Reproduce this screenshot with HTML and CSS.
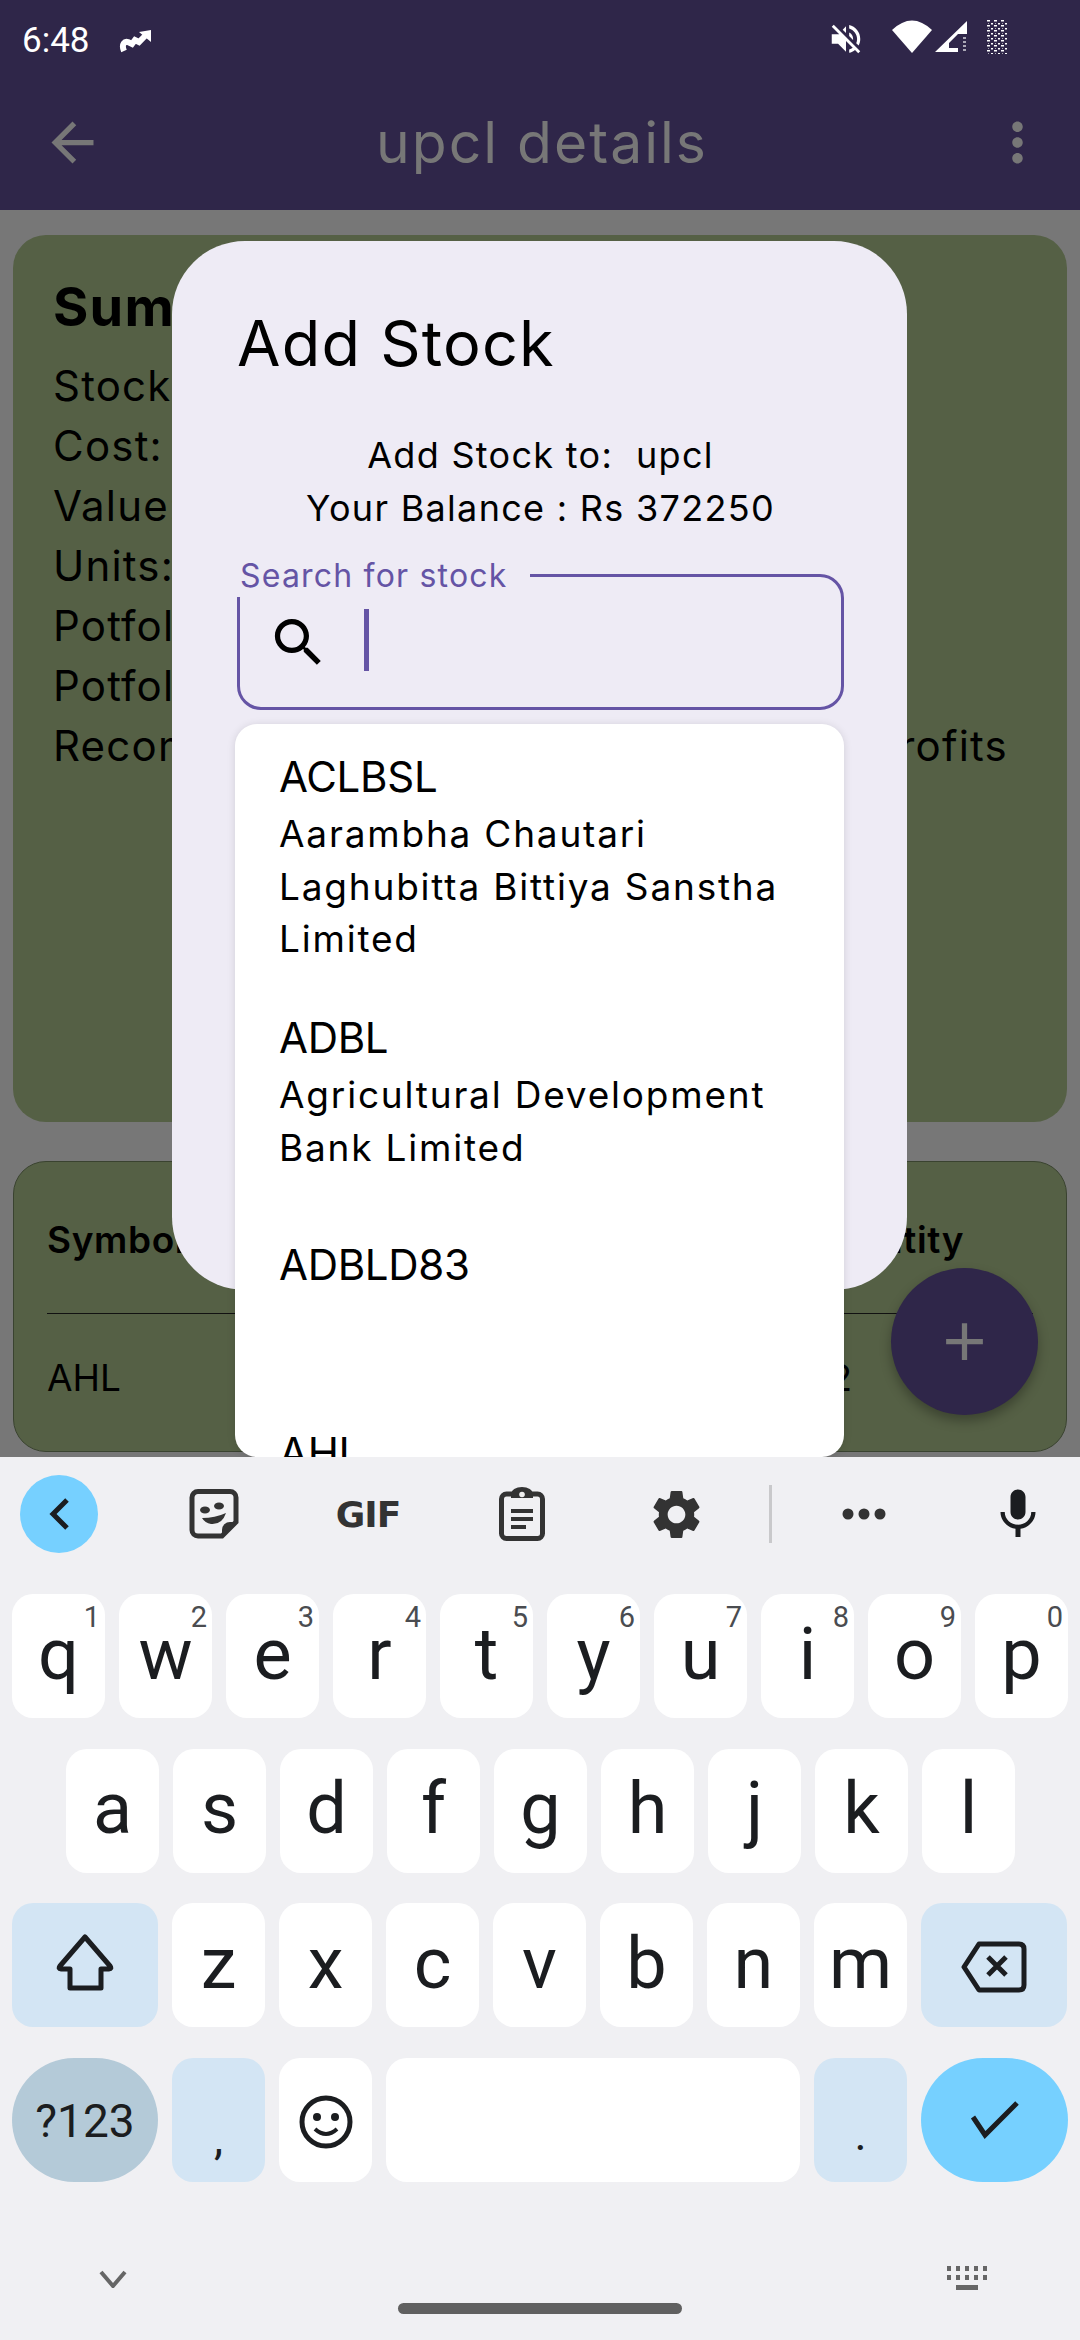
FILE: index.html
```html
<!DOCTYPE html>
<html lang="en">
<head>
    <meta charset="UTF-8">
    <meta name="viewport" content="width=device-width, initial-scale=1.0">
    <title>upcl details</title>
    <link rel="stylesheet" href="styles.css">
</head>
<body>
    <div class="app">
        <div class="status-bar">
            <span class="time">6:48</span>
            <svg class="notif-icon" width="32" height="24" viewBox="0 0 32 24"><path d="M5 21C2 14 6 11 9 12L13 14 16 10 20 12 26 6" fill="none" stroke="#fff" stroke-width="6"/><path d="M20 2 32 0V12Z" fill="#fff"/></svg>
            <svg class="mute-icon" width="38" height="38" viewBox="0 0 24 24"><path fill="#fff" d="M16.5 12c0-1.77-1.02-3.29-2.5-4.03v2.21l2.45 2.45c.03-.2.05-.41.05-.63zm2.5 0c0 .94-.2 1.82-.54 2.64l1.51 1.51C20.63 14.91 21 13.5 21 12c0-4.28-2.99-7.86-7-8.77v2.06c2.89.86 5 3.54 5 6.71zM4.27 3L3 4.27 7.73 9H3v6h4l5 5v-6.73l4.25 4.25c-.67.52-1.42.93-2.25 1.18v2.06c1.38-.31 2.63-.95 3.69-1.81L19.73 21 21 19.73l-9-9L4.27 3zM12 4L9.91 6.09 12 8.18V4z"/></svg>
            <svg class="wifi-icon" width="40" height="34" viewBox="0 0 40 34"><path fill="#fff" d="M0 10Q20 -9 40 10L20 33Z"/></svg>
            <svg class="signal-icon" width="34" height="34" viewBox="0 0 34 34"><path fill="#fff" fill-rule="evenodd" d="M33 1V14H24V32H1ZM24 14 15 23V28H24Z"/><path fill="#fff" opacity=".6" d="M29 17h3v2h-3zM29 21h3v2h-3zM29 25h3v2h-3zM29 29h3v2h-3z"/></svg>
            <svg class="battery-icon" width="20" height="34" viewBox="0 0 20 34">
                <defs><pattern id="noise" width="7" height="5" patternUnits="userSpaceOnUse"><rect width="3" height="1.500" fill="#fff"/><rect x="4" y="3" width="2" height="1.500" fill="#fff"/><rect x="1" y="3" width="1" height="1" fill="#fff" opacity=".6"/></pattern></defs>
                <rect width="20" height="34" fill="url(#noise)"/>
            </svg>
        </div>
        <div class="app-bar">
            <svg width="63" height="63" viewBox="0 0 24 24"><path fill="#777" d="M20 11H7.83l5.59-5.59L12 4l-8 8 8 8 1.41-1.41L7.83 13H20v-2z"/></svg>
            <span class="app-title">upcl details</span>
            <svg width="63" height="63" viewBox="0 0 24 24"><path fill="#777" d="M12 8c1.1 0 2-.9 2-2s-.9-2-2-2-2 .9-2 2 .9 2 2 2zm0 2c-1.1 0-2 .9-2 2s.9 2 2 2 2-.9 2-2-.9-2-2-2zm0 6c-1.1 0-2 .9-2 2s.9 2 2 2 2-.9 2-2-.9-2-2-2z"/></svg>
        </div>

        <div class="card summary">
            <h2>Summary</h2>
            <p>Stocks</p>
            <p>Cost:</p>
            <p>Value:</p>
            <p>Units:</p>
            <p>Potfolio</p>
            <p>Potfolio</p>
            <p class="split"><span>Recommended</span><span>profits</span></p>
        </div>

        <div class="card holdings">
            <div class="holdings-head"><span>Symbol</span><span>Quantity</span></div>
            <div class="holdings-row"><span>AHL</span><span>12</span></div>
        </div>

        <div class="fab">
            <svg width="63" height="63" viewBox="0 0 24 24"><path fill="#777" d="M19 13h-6v6h-2v-6H5v-2h6V5h2v6h6v2z"/></svg>
        </div>

        <div class="dialog">
            <h1>Add Stock</h1>
            <p class="dialog-info">Add Stock to:&nbsp; upcl</p>
            <p class="dialog-info">Your Balance : Rs 372250</p>
            <div class="field field-active">
                <span class="field-label">Search for stock</span>
                <svg width="63" height="63" viewBox="0 0 24 24"><path fill="#000" d="M15.5 14h-.79l-.28-.27C15.41 12.59 16 11.11 16 9.5 16 5.91 13.09 3 9.5 3S3 5.91 3 9.5 5.91 16 9.5 16c1.61 0 3.09-.59 4.23-1.57l.27.28v.79l5 4.99L20.49 19l-4.99-5zm-6 0C7.01 14 5 11.99 5 9.5S7.01 5 9.5 5 14 7.01 14 9.5 11.99 14 9.5 14z"/></svg>
                <span class="caret"></span>
            </div>
            <div class="field field-idle"></div>
            <div class="field field-idle"></div>
        </div>

        <div class="dropdown">
            <div class="option option-three">
                <div class="symbol">ACLBSL</div>
                <div class="company">Aarambha Chautari<br>Laghubitta Bittiya Sanstha<br>Limited</div>
            </div>
            <div class="option option-two">
                <div class="symbol">ADBL</div>
                <div class="company">Agricultural Development<br>Bank Limited</div>
            </div>
            <div class="option option-empty">
                <div class="symbol">ADBLD83</div>
            </div>
            <div class="option">
                <div class="symbol">AHL</div>
            </div>
        </div>
    </div>

    <div class="keyboard">
        <div class="toolbar">
            <div class="tool-back">
                <svg width="26" height="36" viewBox="0 0 26 36"><path d="M21 4 7 18 21 32" fill="none" stroke="#1b1d20" stroke-width="5"/></svg>
            </div>
            <div class="tool tool-sticker">
                <svg width="50" height="50" viewBox="0 0 50 50"><path d="M9 2.5H41a6 6 0 0 1 6 6V33L33 47H9a6 6 0 0 1-6-6V8.5a6 6 0 0 1 6-6Z" fill="none" stroke="#333" stroke-width="5"/><path d="M47 33 33 47V41a8 8 0 0 1 8-8Z" fill="#333"/><ellipse cx="16" cy="21" rx="5" ry="3.5" fill="#333"/><ellipse cx="30" cy="17" rx="5" ry="3.5" fill="#333"/><path d="M13 29Q26 29 37 24 33 36 22 35 16 34 13 29Z" fill="#333"/></svg>
            </div>
            <div class="tool"><span class="gif">GIF</span></div>
            <div class="tool">
                <svg width="46" height="54" viewBox="0 0 46 54"><rect x="2.5" y="7" width="41" height="44.5" rx="5" fill="none" stroke="#333" stroke-width="5"/><path d="M12 7a11 7 0 0 1 22 0v4H12Z" fill="#333"/><circle cx="23" cy="7.500" r="2.800" fill="#eee"/><path d="M12 22h22v4H12zM12 30h22v4H12zM12 38h15v4H12z" fill="#333"/></svg>
            </div>
            <div class="tool">
                <svg width="59" height="59" viewBox="0 0 24 24"><path fill="#333" d="M19.14 12.94c.04-.3.06-.61.06-.94 0-.32-.02-.64-.07-.94l2.03-1.58c.18-.14.23-.41.12-.61l-1.92-3.32c-.12-.22-.37-.29-.59-.22l-2.39.96c-.5-.38-1.03-.7-1.62-.94l-.36-2.54c-.04-.24-.24-.41-.48-.41h-3.84c-.24 0-.43.17-.47.41l-.36 2.54c-.59.24-1.13.57-1.62.94l-2.39-.96c-.22-.08-.47 0-.59.22L2.74 8.87c-.12.21-.08.47.12.61l2.03 1.58c-.05.3-.09.63-.09.94s.02.64.07.94l-2.03 1.58c-.18.14-.23.41-.12.61l1.92 3.32c.12.22.37.29.59.22l2.39-.96c.5.38 1.03.7 1.62.94l.36 2.54c.05.24.24.41.48.41h3.84c.24 0 .44-.17.47-.41l.36-2.54c.59-.24 1.13-.56 1.62-.94l2.39.96c.22.08.47 0 .59-.22l1.92-3.32c.12-.22.07-.47-.12-.61l-2.01-1.58zM12 15.6c-1.98 0-3.6-1.62-3.6-3.6s1.62-3.6 3.6-3.6 3.6 1.62 3.6 3.6-1.62 3.6-3.6 3.6z"/></svg>
            </div>
            <div class="tool-divider"></div>
            <div class="tool tool-more">
                <svg width="44" height="12" viewBox="0 0 44 12"><circle cx="6" cy="6" r="5.500" fill="#333"/><circle cx="22" cy="6" r="5.500" fill="#333"/><circle cx="38" cy="6" r="5.500" fill="#333"/></svg>
            </div>
            <div class="tool">
                <svg width="63" height="63" viewBox="0 0 24 24"><path fill="#1b1d20" d="M12 14c1.66 0 3-1.34 3-3V5c0-1.66-1.34-3-3-3S9 3.34 9 5v6c0 1.66 1.34 3 3 3zm5.3-3c0 3-2.54 5.1-5.3 5.1S6.7 14 6.7 11H5c0 3.41 2.72 6.23 6 6.72V21h2v-3.28c3.28-.48 6-3.3 6-6.72h-1.7z"/></svg>
            </div>
        </div>

        <div class="rows">
            <div class="row">
                <div class="key">q<sup>1</sup></div>
                <div class="key">w<sup>2</sup></div>
                <div class="key">e<sup>3</sup></div>
                <div class="key">r<sup>4</sup></div>
                <div class="key">t<sup>5</sup></div>
                <div class="key">y<sup>6</sup></div>
                <div class="key">u<sup>7</sup></div>
                <div class="key">i<sup>8</sup></div>
                <div class="key">o<sup>9</sup></div>
                <div class="key">p<sup>0</sup></div>
            </div>
            <div class="row row-home">
                <div class="key">a</div>
                <div class="key">s</div>
                <div class="key">d</div>
                <div class="key">f</div>
                <div class="key">g</div>
                <div class="key">h</div>
                <div class="key">j</div>
                <div class="key">k</div>
                <div class="key">l</div>
            </div>
            <div class="row">
                <div class="key key-wide key-blue">
                    <svg width="60" height="58" viewBox="0 0 60 58"><path d="M30 3 55 32Q57 35 54 35H46V54H15V35H6Q3 35 5 32Z" fill="none" stroke="#1b1d20" stroke-width="5" stroke-linejoin="round"/></svg>
                </div>
                <div class="key">z</div>
                <div class="key">x</div>
                <div class="key">c</div>
                <div class="key">v</div>
                <div class="key">b</div>
                <div class="key">n</div>
                <div class="key">m</div>
                <div class="key key-wide key-blue key-icon">
                    <svg width="66" height="52" viewBox="0 0 66 52"><path d="M18 3H58Q63 3 63 8V44Q63 49 58 49H18L3 26Z" fill="none" stroke="#1b1d20" stroke-width="5" stroke-linejoin="round"/><path d="M27 16 45 34M45 16 27 34" stroke="#1b1d20" stroke-width="5"/></svg>
                </div>
            </div>
            <div class="row">
                <div class="key key-wide key-symbols">?123</div>
                <div class="key key-blue key-punct key-comma">,</div>
                <div class="key key-icon">
                    <svg width="54" height="54" viewBox="0 0 54 54"><circle cx="27" cy="27" r="24" fill="none" stroke="#1b1d20" stroke-width="5"/><circle cx="18" cy="22" r="4" fill="#1b1d20"/><circle cx="36" cy="22" r="4" fill="#1b1d20"/><path d="M16 34Q27 44 38 34" fill="none" stroke="#1b1d20" stroke-width="4"/></svg>
                </div>
                <div class="key key-space"></div>
                <div class="key key-blue key-punct">.</div>
                <div class="key key-wide key-done">
                    <svg width="52" height="40" viewBox="0 0 52 40"><path d="M4 17 16 35 48 3" fill="none" stroke="#1b1d20" stroke-width="5"/></svg>
                </div>
            </div>
        </div>

        <div class="kb-nav">
            <svg width="28" height="18" viewBox="0 0 28 18"><path d="M2 2 14 16 26 2" fill="none" stroke="#666" stroke-width="4"/></svg>
            <svg width="41" height="26" viewBox="0 0 41 26"><path fill="#666" d="M0 0h4v5H0zM9 0h4v5H9zM18 0h4v5h-4zM27 0h4v5h-4zM36 0h4v5h-4zM0 9h4v5H0zM9 9h4v5H9zM18 9h4v5h-4zM27 9h4v5h-4zM36 9h4v5h-4zM9 19h22v5H9z"/></svg>
        </div>
        <div class="home-pill"></div>
    </div>
</body>
</html>
```

FILE: styles.css
```css
/* page */
body {
    margin: 0;
    width: 1080px;
    height: 2340px;
    overflow: hidden;
    font-family: Inter, "Noto Sans", sans-serif;
    background: #f0f0f3;
}
h1, h2, p {
    margin: 0;
    font-weight: normal;
}

/* app behind the dialog */
.app {
    position: relative;
    height: 1457px;
    background: #777;
    overflow: hidden;
}
.status-bar {
    display: flex;
    align-items: flex-start;
    height: 60px;
    padding: 20px 0 0 22px;
    background: #2f2649;
}
.time {
    font-family: Roboto, sans-serif;
    font-size: 35px;
    line-height: 41px;
    color: #fff;
}
.notif-icon { margin: 10px 0 0 29px; }
.mute-icon { margin: 0 0 0 676px; }
.wifi-icon { margin-left: 27px; }
.signal-icon { margin-left: 2px; }
.battery-icon { margin-left: 19px; }

.app-bar {
    display: flex;
    align-items: center;
    justify-content: space-between;
    height: 124px;
    padding: 0 31px 6px 41px;
    background: #2f2649;
}
.app-title {
    margin-right: 6px;
    font-size: 57px;
    letter-spacing: 2px;
    color: #777;
}

.card {
    margin: 0 13px;
    background: #556045;
    border-radius: 33px;
    color: #000;
    box-sizing: border-box;
}
.summary {
    height: 887px;
    margin-top: 25px;
    padding: 37px 59px 0 40px;
    font-size: 42px;
    letter-spacing: 1.2px;
}
.summary h2 {
    font-size: 54px;
    font-weight: 700;
    line-height: 70px;
    margin-bottom: 14px;
}
.summary p {
    height: 60px;
    line-height: 60px;
}
.split {
    display: flex;
    justify-content: space-between;
}
.holdings {
    height: 291px;
    margin-top: 39px;
    padding: 0 33px;
    border: 1px solid #3a4330;
    font-size: 37px;
}
.holdings-head {
    display: flex;
    justify-content: space-between;
    height: 151px;
    line-height: 156px;
    padding-right: 69px;
    border-bottom: 1.500px solid #111;
    font-weight: 600;
    letter-spacing: .6px;
}
.holdings-row {
    display: flex;
    justify-content: space-between;
    line-height: 128px;
    padding-right: 181px;
}
.fab {
    position: absolute;
    left: 891px;
    top: 1268px;
    width: 147px;
    height: 147px;
    display: flex;
    align-items: center;
    justify-content: center;
    border-radius: 50%;
    background: #2f2649;
    box-shadow: 0 6px 12px rgba(0, 0, 0, .3);
}

/* dialog */
.dialog {
    position: absolute;
    left: 172px;
    top: 241px;
    width: 735px;
    height: 1049px;
    box-sizing: border-box;
    padding: 59px 63px 0 65px;
    background: #eeebf5;
    border-radius: 73px;
    overflow: hidden;
}
.dialog h1 {
    font-size: 63px;
    line-height: 86px;
    letter-spacing: 1.2px;
    color: #000;
    margin-bottom: 43px;
}
.dialog-info {
    font-size: 36px;
    line-height: 53px;
    letter-spacing: 1.300px;
    text-align: center;
    color: #000;
}
.field {
    position: relative;
    box-sizing: border-box;
    width: 607px;
    height: 136px;
    border-radius: 24px;
}
.field-active {
    display: flex;
    align-items: center;
    margin-top: 39px;
    padding: 0 0 0 27px;
    border: 3px solid #6554a5;
}
.field-idle {
    margin-top: 32px;
    border: 2px solid #a9a0d2;
}
.field-label {
    position: absolute;
    left: -4px;
    top: -14px;
    height: 34px;
    padding: 0 22px 0 4px;
    background: #eeebf5;
    font-size: 32px;
    line-height: 26px;
    letter-spacing: 1.200px;
    color: #6554a5;
    white-space: nowrap;
}
.caret {
    width: 5px;
    height: 62px;
    margin-left: 34px;
    margin-bottom: 5px;
    background: #6554a5;
}

.dropdown {
    position: absolute;
    left: 235px;
    top: 724px;
    width: 608.500px;
    height: 733px;
    padding-top: 24px;
    box-sizing: border-box;
    background: #fff;
    border-radius: 22px;
    box-shadow: 0 1px 8px rgba(0, 0, 0, .12);
    overflow: hidden;
}
.option {
    padding-left: 44px;
    color: #000;
}
.option-three { height: 261px; }
.option-two { height: 227px; }
.option-empty { height: 188px; }
.symbol {
    font-size: 42px;
    line-height: 58px;
    letter-spacing: -.3px;
}
.company {
    margin-top: 2px;
    font-size: 37px;
    line-height: 52.500px;
    letter-spacing: 1.800px;
}

/* keyboard */
.keyboard {
    height: 883px;
    background: #f0f0f3;
}
.toolbar {
    display: flex;
    align-items: center;
    height: 114px;
    padding: 0 0 23px 20px;
}
.tool-back {
    display: flex;
    align-items: center;
    justify-content: center;
    width: 78px;
    height: 78px;
    border-radius: 50%;
    background: #76d0ff;
}
.tool {
    display: flex;
    align-items: center;
    justify-content: center;
    width: 60px;
    height: 60px;
    margin-left: 94px;
}
.tool-sticker { margin-left: 86px; }
.gif {
    font-family: "DejaVu Sans", sans-serif;
    font-size: 36px;
    font-weight: 700;
    color: #333;
    letter-spacing: -1px;
}
.tool-divider {
    width: 3px;
    height: 58px;
    margin-left: 63px;
    background: #c9c9cb;
}
.tool-more { margin-left: 62px; }

.rows {
    display: flex;
    flex-direction: column;
    gap: 30.500px;
}
.row {
    display: flex;
    gap: 14px;
    padding: 0 12px;
}
.row-home { padding-left: 66px; }
.key {
    position: relative;
    display: flex;
    align-items: center;
    justify-content: center;
    flex: none;
    width: 93px;
    height: 124px;
    padding-bottom: 4px;
    box-sizing: border-box;
    background: #fff;
    border-radius: 21px;
    font-family: Roboto, sans-serif;
    font-size: 72px;
    color: #1b1d20;
}
.key sup {
    position: absolute;
    right: 5px;
    top: 6px;
    font-size: 29px;
    line-height: 34px;
    color: #4a4c50;
}
.key-wide { width: 146px; }
.key-blue { background: #d3e5f4; }
.key-icon { padding: 4px 0 0; }
.key-symbols {
    background: #b4cad8;
    border-radius: 62px;
    font-size: 46px;
    padding: 2px 0 0;
}
.key-space { width: 414px; }
.key-punct {
    font-size: 46px;
    line-height: 153px;
    align-items: flex-start;
    padding: 0;
}
.key-comma { padding-top: 4px; }
.key-done {
    width: 147px;
    background: #76d0ff;
    border-radius: 62px;
    padding: 0;
}
.kb-nav {
    display: flex;
    align-items: center;
    justify-content: space-between;
    margin-top: 84px;
    height: 26px;
    padding: 0 92px 0 99px;
}
.home-pill {
    width: 284px;
    height: 11px;
    margin: 11px auto 0;
    border-radius: 6px;
    background: #606060;
}
```
